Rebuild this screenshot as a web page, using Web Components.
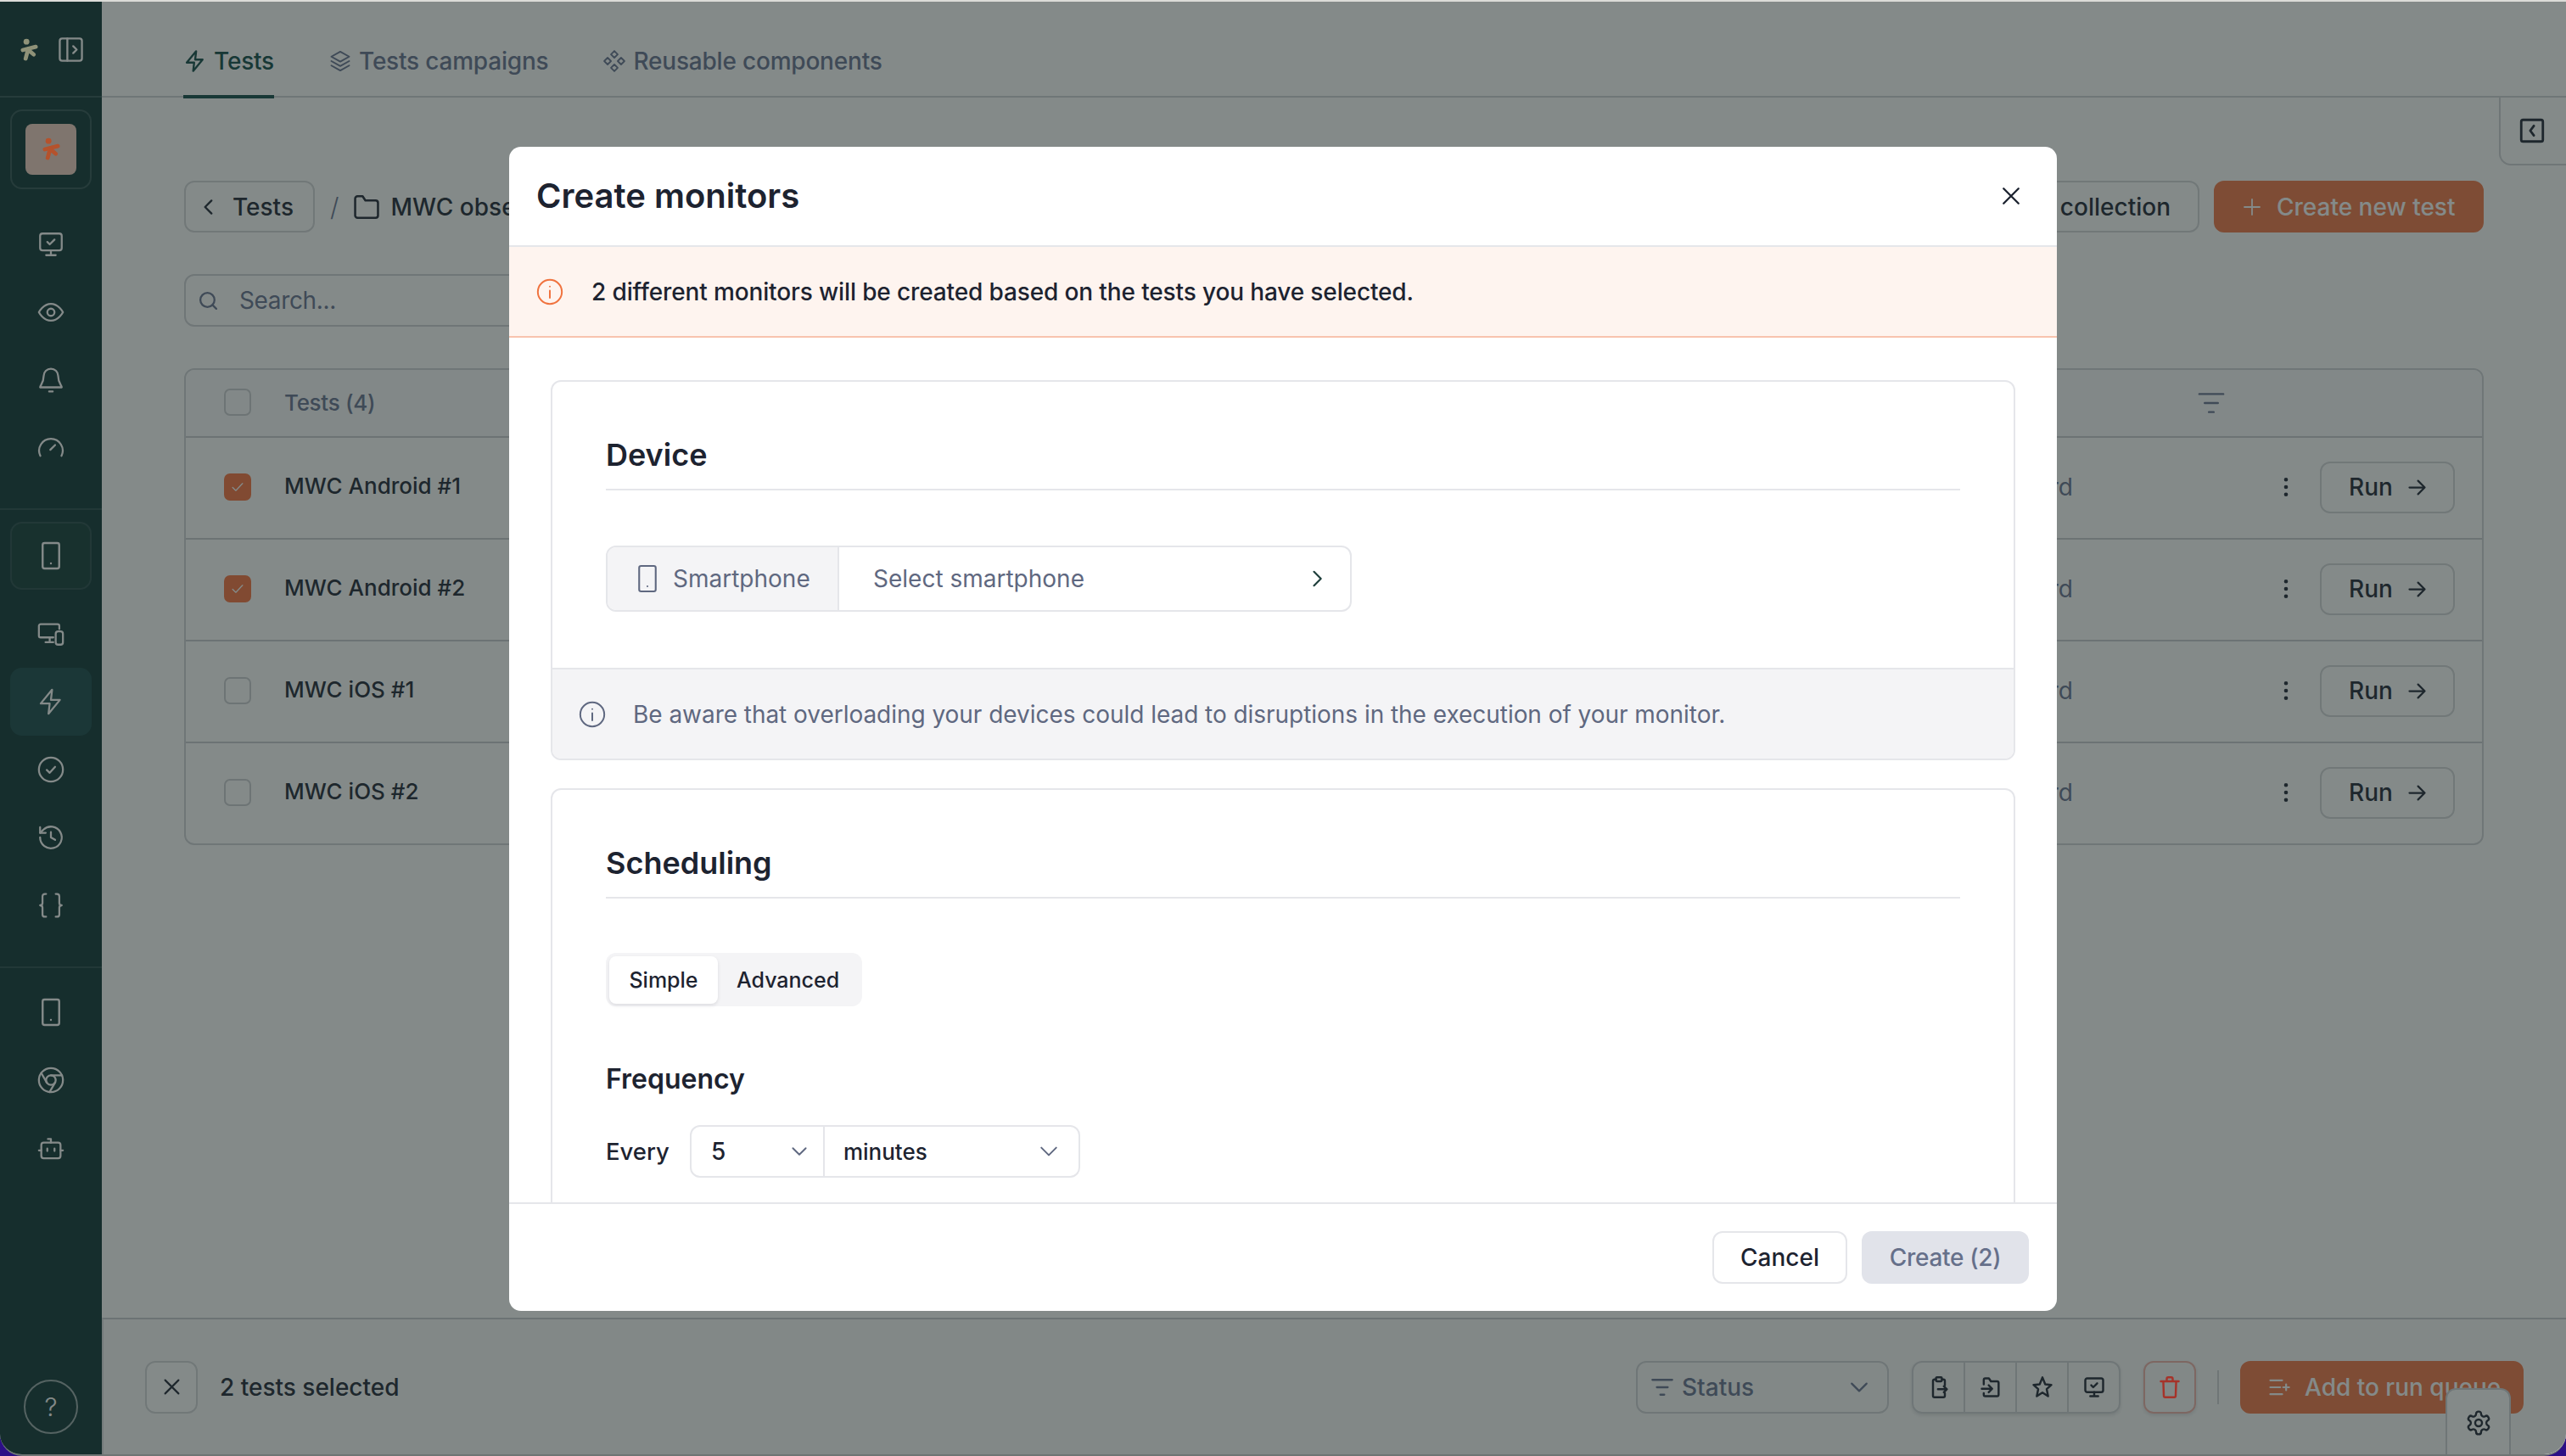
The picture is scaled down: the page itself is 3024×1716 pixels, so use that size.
<!DOCTYPE html>
<html lang="en">
<head>
<meta charset="utf-8">
<title>Create monitors</title>
<style>
  html, body { margin: 0; padding: 0; background: #2c0f86; }
  body { width: 3024px; height: 1716px; overflow: hidden; font-family: Inter, "Liberation Sans", sans-serif; }
</style>
</head>
<body>
<app-shell>
  <side-nav slot="nav"></side-nav>
  <tests-page slot="page"></tests-page>
  <modal-backdrop slot="overlay">
    <create-monitors></create-monitors>
  </modal-backdrop>
</app-shell>

<script>
const PATHS = {
  monitorCheck: '<path d="M3 5a2 2 0 0 1 2-2h14a2 2 0 0 1 2 2v10a2 2 0 0 1-2 2H5a2 2 0 0 1-2-2z"/><path d="M12 17v4M8 21h8M9 10l2 2 4-4"/>',
  eye: '<path d="M2 12s3.6-7 10-7 10 7 10 7-3.6 7-10 7-10-7-10-7z"/><circle cx="12" cy="12" r="3"/>',
  bell: '<path d="M18 8.5a6 6 0 1 0-12 0c0 6-3 8-3 9.500h18c0-1.500-3-3.500-3-9.500z"/><path d="M10.500 21.500h3"/>',
  gauge: '<path d="M3.200 18.500a9.800 9.800 0 1 1 17.600 0"/><path d="M11.500 13.500l4-4"/>',
  phone: '<rect x="5.500" y="2" width="13" height="20" rx="1.500"/><path d="M12 18h.01"/>',
  devices: '<path d="M19 8V5.500A1.500 1.500 0 0 0 17.500 4h-14A1.500 1.500 0 0 0 2 5.500v8A1.500 1.500 0 0 0 3.500 15H14"/><path d="M11 15v4M7.500 19H14"/><rect x="16" y="10" width="6" height="11" rx="2"/>',
  bolt: '<path d="M13 2 3.500 13.500H11L10 22l9.500-11.500H12z"/>',
  checkCircle: '<circle cx="12" cy="12" r="10"/><path d="M8.500 12.300l2.500 2.400 4.500-5"/>',
  history: '<path d="M3 12a9 9 0 1 0 2.800-6.500L3 8.200"/><path d="M3 3.500v4.700h4.700M12 7.500V12l3.500 2"/>',
  braces: '<path d="M8 2.500H7a2 2 0 0 0-2 2V10c0 1.100-.9 2-2 2 1.100 0 2 .9 2 2v5.500a2 2 0 0 0 2 2h1"/><path d="M16 2.500h1a2 2 0 0 1 2 2V10c0 1.100.9 2 2 2-1.100 0-2 .9-2 2v5.500a2 2 0 0 1-2 2h-1"/>',
  chrome: '<circle cx="12" cy="12" r="10"/><circle cx="12" cy="12" r="4"/><path d="M21.170 8H12M3.950 6.060 8.540 14M10.880 21.940 15.460 14"/>',
  bot: '<path d="M12 7.500V4.500H9.500"/><rect x="4" y="7.500" width="16" height="13" rx="2"/><path d="M2 14h2M20 14h2M9 12.500v2M15 12.500v2"/>',
  panelOpen: '<rect x="2.500" y="2.500" width="19" height="19" rx="2"/><path d="M9 2.500v19M14 9l3 3-3 3"/>',
  panelClose: '<rect x="3" y="3" width="18" height="18" rx="1.500"/><path d="M13.500 8l-3 4 3 4"/>',
  layers: '<path d="M12 2.500 3 7.500l9 5 9-5z"/><path d="M3 12l9 5 9-5M3 16.500l9 5 9-5"/>',
  diamonds: '<path d="M12 1.800l3.400 3.400L12 8.600 8.600 5.200zM12 15.400l3.400 3.400-3.400 3.400-3.400-3.400zM5.200 8.600 8.600 12l-3.400 3.400L1.800 12zM18.800 8.600l3.400 3.400-3.400 3.400-3.400-3.400z"/>',
  chevLeft: '<path d="M15 5l-7 7 7 7"/>',
  chevRight: '<path d="M9 5l7 7-7 7"/>',
  chevDown: '<path d="M5 8.500l7 7 7-7"/>',
  search: '<circle cx="11" cy="11" r="8"/><path d="M21 21l-4.300-4.300"/>',
  folder: '<path d="M2.500 5a2 2 0 0 1 2-2h4.200l2.300 3.500h8.500a2 2 0 0 1 2 2V19a2 2 0 0 1-2 2h-15a2 2 0 0 1-2-2z"/>',
  filter: '<path d="M2 4.500h20M6.500 12h11M10 19.500h4"/>',
  kebab: '<path d="M12 4.500h.01M12 12h.01M12 19.500h.01" stroke-width="4"/>',
  arrow: '<path d="M4 12h16M13 5l7 7-7 7"/>',
  close: '<path d="M5 5l14 14M19 5 5 19"/>',
  plus: '<path d="M12 3v18M3 12h18"/>',
  info: '<circle cx="12" cy="12" r="10"/><path d="M12 11v6M12 7.500h.01"/>',
  clipboard: '<path d="M9 4H7.500A1.500 1.500 0 0 0 6 5.500v15A1.500 1.500 0 0 0 7.500 22h9a1.500 1.500 0 0 0 1.500-1.500V18M18 10V5.500A1.500 1.500 0 0 0 16.500 4H15"/><rect x="9" y="2" width="6" height="4" rx="1"/><path d="M11 14h9M17 11l3 3-3 3"/>',
  folderIn: '<path d="M5 9V4.500A1.500 1.500 0 0 1 6.500 3h3.700l2 3h6.300A1.500 1.500 0 0 1 20 7.500v12a1.500 1.500 0 0 1-1.500 1.500h-12A1.500 1.500 0 0 1 5 19.500V18"/><path d="M3 13.500h10M10 10l3.500 3.500L10 17"/>',
  star: '<path d="M12 2l2.800 7 6.200.6-4.700 4.300 1.400 7.100-5.700-3.700L6.300 21l1.400-7.100L3 9.600 9.200 9z"/>',
  trash: '<path d="M3 6h18M9 6V3.500A1.500 1.500 0 0 1 10.500 2h3A1.500 1.500 0 0 1 15 3.500V6M18.500 6l-.5 14.500a1.500 1.500 0 0 1-1.500 1.500h-9A1.500 1.500 0 0 1 6 20.500L5.500 6"/>',
  queue: '<path d="M3 5h12M3 12h10M3 19h12M16 12h6M19 9v6"/>',
  gear: '<path d="M12.220 2h-.44a2 2 0 0 0-2 2v.18a2 2 0 0 1-1 1.730l-.43.25a2 2 0 0 1-2 0l-.15-.08a2 2 0 0 0-2.730.73l-.22.38a2 2 0 0 0 .73 2.730l.15.1a2 2 0 0 1 1 1.720v.51a2 2 0 0 1-1 1.740l-.15.09a2 2 0 0 0-.73 2.730l.22.38a2 2 0 0 0 2.730.73l.15-.08a2 2 0 0 1 2 0l.43.25a2 2 0 0 1 1 1.730V20a2 2 0 0 0 2 2h.44a2 2 0 0 0 2-2v-.18a2 2 0 0 1 1-1.730l.43-.25a2 2 0 0 1 2 0l.15.08a2 2 0 0 0 2.730-.73l.22-.39a2 2 0 0 0-.73-2.730l-.15-.08a2 2 0 0 1-1-1.740v-.5a2 2 0 0 1 1-1.740l.15-.09a2 2 0 0 0 .73-2.730l-.22-.38a2 2 0 0 0-2.730-.73l-.15.08a2 2 0 0 1-2 0l-.43-.25a2 2 0 0 1-1-1.730V4a2 2 0 0 0-2-2z"/><circle cx="12" cy="12" r="3"/>',
  check: '<path d="M5 12.500l4.500 4.500L19 7"/>'
};

class UiIcon extends HTMLElement {
  constructor() {
    super();
    this.attachShadow({ mode: 'open' });
  }
  connectedCallback() {
    const size = this.getAttribute('size') || 24;
    const width = this.getAttribute('weight') || 2;
    this.shadowRoot.innerHTML = `
      <style>:host{display:inline-flex;flex:none;line-height:0}</style>
      <svg width="${size}" height="${size}" viewBox="0 0 24 24" fill="none" stroke="currentColor"
        stroke-width="${width}" stroke-linecap="round" stroke-linejoin="round">${PATHS[this.getAttribute('name')]}</svg>`;
  }
}
customElements.define('ui-icon', UiIcon);

class BrandMark extends HTMLElement {
  constructor() {
    super();
    this.attachShadow({ mode: 'open' }).innerHTML = `
      <style>:host{display:inline-flex;line-height:0;position:relative;z-index:30}</style>
      <svg viewBox="0 0 22 28" fill="none" stroke="currentColor" stroke-linecap="round" width="100%" height="100%">
        <circle cx="7.500" cy="3.700" r="3.600" fill="currentColor" stroke="none"/>
        <path d="M3 14 19 10" stroke-width="5"/>
        <path d="M9.500 13 6.500 24.500" stroke-width="5"/>
        <path d="M11 15 16.500 19.500" stroke-width="5"/>
      </svg>`;
  }
}
customElements.define('brand-mark', BrandMark);

class AppShell extends HTMLElement {
  constructor() {
    super();
    this.attachShadow({ mode: 'open' }).innerHTML = `
      <style>
        :host{display:grid;grid-template-columns:120px 1fr;position:relative;box-sizing:border-box;width:3024px;height:1716px;
          border-top:2px solid #dcdcd8;border-bottom:2px solid #6f7574;border-radius:0 0 26px 26px;overflow:hidden;background:#fff}
      </style>
      <slot name="nav"></slot><slot name="page"></slot><slot name="overlay"></slot>`;
  }
}
customElements.define('app-shell', AppShell);

class ModalBackdrop extends HTMLElement {
  constructor() {
    super();
    this.attachShadow({ mode: 'open' }).innerHTML = `
      <style>
        :host{position:absolute;inset:0;z-index:20;display:flex;align-items:center;justify-content:center;
          box-sizing:border-box;padding-top:2px;background:rgba(9,21,19,.5)}
      </style><slot></slot>`;
  }
}
customElements.define('modal-backdrop', ModalBackdrop);

class SideNav extends HTMLElement {
  constructor() {
    super();
    const item = (name, cls = '', size = 34) => `<div class="item ${cls}"><ui-icon name="${name}" size="${size}" weight="1.6"></ui-icon></div>`;
    this.attachShadow({ mode: 'open' }).innerHTML = `
      <style>
        :host{display:flex;flex-direction:column;height:100%;background:#234747;color:#fff;box-sizing:border-box;font-family:Inter,sans-serif}
        .top{box-sizing:border-box;height:113px;display:flex;align-items:center;gap:22px;padding:2px 0 0 24px;border-bottom:2px solid #436262}
        .top brand-mark{width:21px;height:28px;color:#8f9278}
        .frame{box-sizing:border-box;margin:14px 12px 0;height:94px;border:2px solid #436262;border-radius:14px;display:flex;align-items:center;justify-content:center}
        .tile{width:60px;height:60px;border-radius:8px;background:#f5d5c9;display:flex;align-items:center;justify-content:center}
        .tile brand-mark{width:21px;height:28px;color:#b5522c}
        .item{height:80px;display:flex;align-items:center;justify-content:center}
        .group{margin-top:25px}
        .rule{border-top:2px solid #3a5b5b}
        .boxed{box-sizing:border-box;margin:14px 12px 12px;height:80px;border:2px solid #3a5b5b;border-radius:14px;background:#274c49}
        .active{margin:0 12px;border-radius:14px;background:#2d595b}
        .help{box-sizing:border-box;margin:auto 0 24px 28px;width:64px;height:64px;border:2px solid #a0b0b0;border-radius:50%;
          display:flex;align-items:center;justify-content:center;font-size:30px;font-weight:300;color:#fff}
      </style>
      <div class="top"><brand-mark></brand-mark><ui-icon name="panelOpen" size="33" weight="1.7"></ui-icon></div>
      <div class="frame"><div class="tile"><brand-mark></brand-mark></div></div>
      <div class="group">
        ${item('monitorCheck')}${item('eye')}${item('bell')}${item('gauge')}
      </div>
      <div class="rule" style="margin-top:31px"></div>
      ${item('phone', 'boxed', 36)}
      ${item('devices')}${item('bolt', 'active')}${item('checkCircle')}${item('history')}${item('braces')}
      <div class="rule" style="margin-top:32px;margin-bottom:12px"></div>
      ${item('phone', '', 36)}${item('chrome')}${item('bot')}
      <div class="help">?</div>`;
  }
}
customElements.define('side-nav', SideNav);

class UiButton extends HTMLElement {
  constructor() {
    super();
    this.attachShadow({ mode: 'open' }).innerHTML = `
      <style>
        :host{display:inline-flex;align-items:center;box-sizing:border-box;height:61px;border:2px solid #d9dadd;border-radius:12px;
          font-size:var(--btn-size,28px);font-weight:500;color:#333947;background:#fff;white-space:nowrap}
        :host([primary]){background:#f38357;border-color:#f38357;color:#fff}
      </style><slot></slot>`;
  }
}
customElements.define('ui-button', UiButton);

class TestRow extends HTMLElement {
  constructor() {
    super();
    this.attachShadow({ mode: 'open' });
  }
  connectedCallback() {
    const checked = this.hasAttribute('checked');
    this.shadowRoot.innerHTML = `
      <style>
        :host{display:flex;align-items:center;box-sizing:border-box;height:120px;border-top:2px solid #cfd1d4;padding:0 32px 2px 45px;
          font-size:28px;font-weight:500;color:#333947}
        .box{box-sizing:border-box;width:32px;height:32px;border-radius:7px;border:2px solid #d0d2d6;margin-right:39px;display:flex;align-items:center;justify-content:center;color:#fff}
        .box.on{background:#f87f50;border-color:#f87f50}
        .name{flex:1;font-size:26px;margin-top:-3px}
        .kind{font-weight:400;color:#757f9b;margin-right:237px}
        .more{color:#333947;margin-right:26px}
        ui-button{width:159px;padding-left:32px;gap:15px}
      </style>
      <div class="box ${checked ? 'on' : ''}">${checked ? '<ui-icon name="check" size="20" weight="1.6"></ui-icon>' : ''}</div>
      <span class="name">${this.getAttribute('name')}</span>
      <span class="kind">rd</span>
      <ui-icon class="more" name="kebab" size="28"></ui-icon>
      <ui-button>Run<ui-icon name="arrow" size="27" weight="2"></ui-icon></ui-button>`;
  }
}
customElements.define('test-row', TestRow);

class TestsPage extends HTMLElement {
  constructor() {
    super();
    this.attachShadow({ mode: 'open' }).innerHTML = `
      <style>
        :host{display:flex;flex-direction:column;height:1712px;position:relative;font-family:Inter,sans-serif;color:#333947}
        .tabs{box-sizing:border-box;height:113px;flex:none;display:flex;gap:64px;padding-left:96px;border-bottom:2px solid #d5d6da;font-size:28px;font-weight:500;letter-spacing:-.2px;color:#757f9b}
        .tab{display:flex;align-items:center;gap:8px;height:113px;box-sizing:border-box;padding-top:27px}
        .tab.on{color:#275b58;border-bottom:4px solid #275b58;padding-top:30px;height:114px}
        .content{flex:1;padding:98px 97px 0}
        .bar{display:flex;align-items:center}
        .bar .spacer{flex:1}
        .back{padding-left:14px;gap:15px;width:154px}
        .slash{margin:0 16px 0 18px;font-size:30px;font-weight:300;color:#757f9b}
        .crumb{display:flex;align-items:center;gap:11px;font-size:28px;font-weight:500}
        .collect{padding:0 32px 0 150px}
        .create{margin-left:17px;width:318px;padding-left:31px;gap:17px}
        .search{box-sizing:border-box;margin-top:49px;width:900px;height:62px;border:2px solid #d5d6da;border-radius:12px;display:flex;align-items:center;gap:24px;padding-left:14px;font-size:28px;letter-spacing:-.35px;color:#757f9b}
        .table{margin-top:49px;border:2px solid #d5d6da;border-radius:12px;overflow:hidden}
        .thead{height:78px;display:flex;align-items:center;padding-left:45px;font-size:26px;font-weight:500;letter-spacing:-.3px;color:#757f9b;background:#fbfbfc}
        .thead i{box-sizing:border-box;width:32px;height:32px;border:2px solid #d0d2d6;border-radius:7px;margin-right:39px;margin-top:-2px}
        .thead span{flex:1;margin-top:-2px}
        .thead ui-icon{margin-right:302px}
        .foot{box-sizing:border-box;flex:none;height:161px;border-top:2px solid #cfd1d4;border-left:2px solid #dfe0e2;background:#fbfbfb;display:flex;align-items:center;padding:0 50px 0 49px}
        .foot .x{width:62px;justify-content:center;height:62px}
        .foot .count{flex:1;margin-left:26px;font-size:28px;font-weight:500}
        .status{box-sizing:border-box;width:298px;height:62px;border:2px solid #d5d6da;border-radius:12px;display:flex;align-items:center;padding:0 18px 0 15px;gap:9px;font-size:28px;font-weight:500;color:#757f9b}
        .status span{flex:1}
        .icons{display:flex;box-sizing:border-box;margin-left:27px;width:246px;height:62px;border:2px solid #d5d6da;border-radius:12px;box-shadow:0 2px 4px rgba(16,24,40,.12)}
        .icons div{flex:1;box-sizing:border-box;display:flex;align-items:center;justify-content:center;border-left:2px solid #d5d6da}
        .icons div:first-child{border-left:0}
        .del{box-sizing:border-box;margin-left:27px;width:62px;height:62px;border:2px solid #f0b8b0;border-radius:12px;display:flex;align-items:center;justify-content:center;color:#a5332a;box-shadow:0 2px 4px rgba(16,24,40,.12)}
        .del ui-icon{position:relative;z-index:30}
        .sep{width:2px;height:40px;background:#d5d6da;margin:0 25px}
        .queue{width:334px;height:62px;padding-left:30px;gap:16px}
        .dock{position:absolute;box-sizing:border-box;right:65px;bottom:0;width:77px;height:78px;background:#fff;border:2px solid #d5d6da;border-bottom:0;border-radius:12px 12px 0 0;display:flex;align-items:center;justify-content:center;padding-top:2px}
        .collapse{position:absolute;box-sizing:border-box;top:113px;right:-2px;width:81px;height:80px;background:#fff;border:2px solid #d5d6da;border-top:0;border-radius:0 0 0 14px;display:flex;align-items:center;justify-content:center;padding-right:4px}
      </style>
      <nav class="tabs">
        <div class="tab on"><ui-icon name="bolt" size="28"></ui-icon>Tests</div>
        <div class="tab"><ui-icon name="layers" size="28" weight="1.7"></ui-icon>Tests campaigns</div>
        <div class="tab"><ui-icon name="diamonds" size="28" weight="1.6"></ui-icon>Reusable components</div>
      </nav>
      <div class="collapse"><ui-icon name="panelClose" size="34"></ui-icon></div>
      <section class="content">
        <div class="bar">
          <ui-button class="back"><ui-icon name="chevLeft" size="26" weight="2.2"></ui-icon>Tests</ui-button>
          <span class="slash">/</span>
          <span class="crumb"><ui-icon name="folder" size="34" weight="1.8"></ui-icon>MWC obse</span>
          <span class="spacer"></span>
          <ui-button class="collect">collection</ui-button>
          <ui-button class="create" primary><ui-icon name="plus" size="24" weight="1.8"></ui-icon>Create new test</ui-button>
        </div>
        <div class="search"><ui-icon name="search" size="25" weight="2.2"></ui-icon>Search...</div>
        <div class="table">
          <div class="thead"><i></i><span>Tests (4)</span><ui-icon name="filter" size="34" weight="1.7"></ui-icon></div>
          <test-row name="MWC Android #1" checked></test-row>
          <test-row name="MWC Android #2" checked></test-row>
          <test-row name="MWC iOS #1"></test-row>
          <test-row name="MWC iOS #2"></test-row>
        </div>
      </section>
      <footer class="foot">
        <ui-button class="x"><ui-icon name="close" size="27" weight="1.9"></ui-icon></ui-button>
        <span class="count">2 tests selected</span>
        <div class="status"><ui-icon name="filter" size="28"></ui-icon><span>Status</span><ui-icon name="chevDown" size="30" weight="1.8"></ui-icon></div>
        <div class="icons">
          <div><ui-icon name="clipboard" size="28" weight="2.1"></ui-icon></div>
          <div><ui-icon name="folderIn" size="28" weight="2.1"></ui-icon></div>
          <div><ui-icon name="star" size="28" weight="2.1"></ui-icon></div>
          <div><ui-icon name="monitorCheck" size="28" weight="2.1"></ui-icon></div>
        </div>
        <div class="del"><ui-icon name="trash" size="28" weight="2.1"></ui-icon></div>
        <i class="sep"></i>
        <ui-button class="queue" primary><ui-icon name="queue" size="28" weight="1.9"></ui-icon>Add to run queue</ui-button>
      </footer>
      <div class="dock"><ui-icon name="gear" size="32" weight="1.8"></ui-icon></div>`;
  }
}
customElements.define('tests-page', TestsPage);

class FormCard extends HTMLElement {
  constructor() {
    super();
    this.attachShadow({ mode: 'open' });
  }
  connectedCallback() {
    this.shadowRoot.innerHTML = `
      <style>
        :host{display:block;box-sizing:border-box;border:2px solid #e5e6ea;border-radius:12px;overflow:hidden;background:#fff}
        .inner{padding:64px 63px 0}
        h2{margin:0;padding-bottom:18px;font-size:36px;line-height:44px;font-weight:600;color:#1d2330;border-bottom:2px solid #e5e6ea}
      </style>
      <div class="inner"><h2>${this.getAttribute('heading')}</h2><slot></slot></div>
      <slot name="note"></slot>`;
  }
}
customElements.define('form-card', FormCard);

class DevicePicker extends HTMLElement {
  constructor() {
    super();
    this.attachShadow({ mode: 'open' }).innerHTML = `
      <style>
        :host{display:flex;box-sizing:border-box;margin-top:65px;width:879px;height:78px;border:2px solid #e5e6ea;border-radius:12px;overflow:hidden;font-size:28px;color:#5f6880}
        .kind{box-sizing:border-box;width:273px;background:#f4f4f6;border-right:2px solid #e5e6ea;display:flex;align-items:center;gap:12px;padding-left:29px}
        .value{flex:1;display:flex;align-items:center;justify-content:space-between;padding:0 25px 0 40px}
        .value ui-icon{color:#1f3f3c}
      </style>
      <div class="kind"><ui-icon name="phone" size="36" weight="1.4"></ui-icon>Smartphone</div>
      <div class="value">Select smartphone<ui-icon name="chevRight" size="28" weight="1.9"></ui-icon></div>`;
  }
}
customElements.define('device-picker', DevicePicker);

class NoticeStrip extends HTMLElement {
  constructor() {
    super();
    this.attachShadow({ mode: 'open' }).innerHTML = `
      <style>
        :host{display:flex;align-items:center;box-sizing:border-box;margin-top:66px;height:107px;gap:31px;padding-left:30px;background:#f4f4f6;border-top:2px solid #e5e6ea;font-size:28px;letter-spacing:-.04px;color:#5f6880}
      </style>
      <ui-icon name="info" size="34" weight="1.4"></ui-icon><slot></slot>`;
  }
}
customElements.define('notice-strip', NoticeStrip);

class SchedulingForm extends HTMLElement {
  constructor() {
    super();
    this.attachShadow({ mode: 'open' }).innerHTML = `
      <style>
        :host{display:block;font-size:25px;color:#1d2330}
        .seg{display:inline-flex;box-sizing:border-box;margin-top:64px;height:63px;padding:4px;background:#f4f4f6;border-radius:12px;font-weight:500;vertical-align:top}
        .seg span{display:flex;align-items:center}
        .seg .on{box-sizing:border-box;width:128px;height:56px;justify-content:center;background:#fff;border-radius:8px;box-shadow:0 2px 4px rgba(16,24,40,.1)}
        .seg .off{padding:0 23px 0 22px}
        h3{margin:66px 0 0;font-size:32px;line-height:40px;font-weight:600}
        .row{display:flex;align-items:center;margin:34px 0 64px;font-size:27.500px;font-weight:500}
        .selects{display:flex;box-sizing:border-box;margin-left:24px;height:62px;border:2px solid #e5e6ea;border-radius:12px;font-size:26px}
        .selects div{display:flex;align-items:center;justify-content:space-between;box-sizing:border-box}
        .n{width:157px;padding:0 15px 0 23px;border-right:2px solid #e5e6ea;font-size:28px}
        .u{width:299px;padding:0 20px 0 22px}
        ui-icon{color:#5f6880}
      </style>
      <div class="seg"><span class="on">Simple</span><span class="off">Advanced</span></div>
      <h3>Frequency</h3>
      <div class="row">Every
        <div class="selects">
          <div class="n">5<ui-icon name="chevDown" size="26" weight="1.8"></ui-icon></div>
          <div class="u">minutes<ui-icon name="chevDown" size="30" weight="1.6"></ui-icon></div>
        </div>
      </div>`;
  }
}
customElements.define('scheduling-form', SchedulingForm);

class CreateMonitors extends HTMLElement {
  constructor() {
    super();
    this.attachShadow({ mode: 'open' }).innerHTML = `
      <style>
        :host{display:flex;flex-direction:column;width:1824px;height:1372px;background:#fff;border-radius:14px;overflow:hidden;font-family:Inter,sans-serif;color:#1d2330}
        header{box-sizing:border-box;flex:none;height:118px;display:flex;align-items:center;justify-content:space-between;padding:0 39px 1px 32px;border-bottom:2px solid #e5e6ea}
        h1{margin:0;font-size:40px;font-weight:600}
        .banner{box-sizing:border-box;flex:none;height:107px;display:flex;align-items:center;gap:32px;padding-left:31px;background:#fef4ef;border-bottom:2px solid #f8c3ae;font-size:28px;font-weight:500;letter-spacing:-.13px}
        .banner ui-icon{color:#f0733f}
        .body{flex:1;min-height:0;overflow:hidden;padding:50px 49px 0}
        .gap{height:33px}
        footer{box-sizing:border-box;flex:none;height:128px;display:flex;align-items:center;justify-content:flex-end;gap:17px;padding:0 33px 0 0;border-top:2px solid #e5e6ea}
        button{box-sizing:border-box;height:62px;border-radius:12px;font:500 28px Inter,sans-serif;padding:0}
        .cancel{width:159px;background:#fff;border:2px solid #e5e6ea;color:#1d2330}
        .go{width:197px;background:#e1e3ea;border:0;color:#66708a;letter-spacing:-.3px}
      </style>
      <header><h1>Create monitors</h1><ui-icon name="close" size="30" weight="1.9"></ui-icon></header>
      <div class="banner"><ui-icon name="info" size="34" weight="1.4"></ui-icon><span>2 different monitors will be created based on the tests you have selected.</span></div>
      <div class="body">
        <form-card heading="Device">
          <device-picker></device-picker>
          <notice-strip slot="note">Be aware that overloading your devices could lead to disruptions in the execution of your monitor.</notice-strip>
        </form-card>
        <div class="gap"></div>
        <form-card heading="Scheduling"><scheduling-form></scheduling-form></form-card>
      </div>
      <footer><button class="cancel">Cancel</button><button class="go">Create (2)</button></footer>`;
  }
}
customElements.define('create-monitors', CreateMonitors);
</script>
</body>
</html>
